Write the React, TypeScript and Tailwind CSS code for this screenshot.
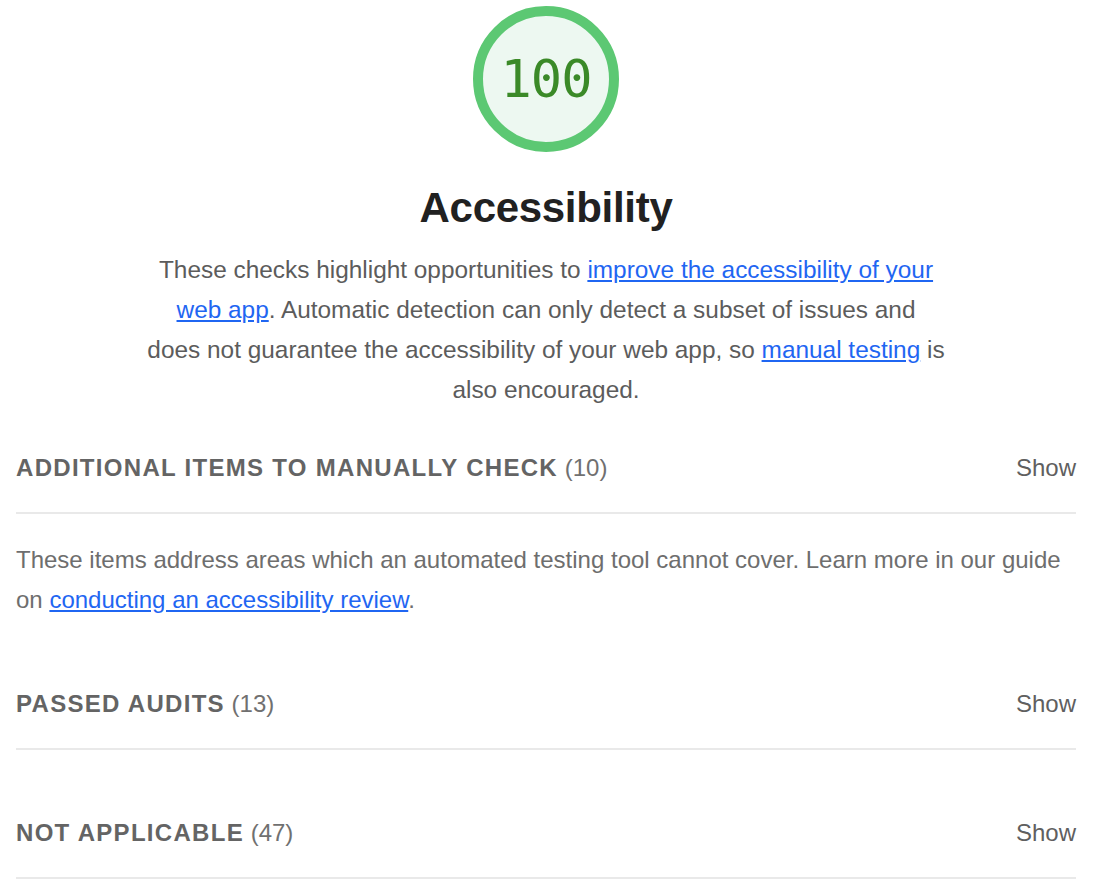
const sans = { fontFamily: '"Liberation Sans", Arial, sans-serif' };

function Gauge({ score }: { score: number }) {
  return (
    <div className="relative w-[146px] h-[146px]">
      <svg viewBox="0 0 146 146" className="w-full h-full">
        <circle cx="73" cy="73" r="68" fill="#edf8f1" stroke="#5cc873" strokeWidth="10" />
      </svg>
      <div className="absolute inset-0 flex items-center justify-center font-['DejaVu_Sans_Mono',monospace] text-[52px] text-[#3b8a28] tracking-[-1px]">
        {score}
      </div>
    </div>
  );
}

function SectionHeader({ title, count }: { title: string; count: number }) {
  return (
    <div className="flex items-center justify-between h-[90px] border-b-2 border-[#e9e9e9] text-[#646464]">
      <div className="text-[24px]">
        <span className="font-bold uppercase tracking-[1.3px]">{title}</span>{" "}
        <span className="text-[#707070]">({count})</span>
      </div>
      <button className="text-[24px] text-[#5f5f5f]">Show</button>
    </div>
  );
}

export default function App() {
  return (
    <div className="bg-white min-h-[886px] pl-4 pr-6" style={sans}>
      {/* score gauge + title */}
      <div className="flex flex-col items-center pt-[6px]">
        <Gauge score={100} />
        <h1 className="mt-[30px] text-[42px] leading-[52px] font-bold text-[#212121] tracking-[-0.3px]">Accessibility</h1>
        <p className="mt-[16px] max-w-[804px] text-center text-[24.4px] leading-[40px] text-[#5c5c5c]">
          These checks highlight opportunities to{" "}
          <a href="#" className="text-[#1f66f2] underline underline-offset-2">improve the accessibility of your web app</a>. Automatic
          detection can only detect a subset of issues and
          <br />
          does not guarantee the accessibility of your web app, so{" "}
          <a href="#" className="text-[#1f66f2] underline underline-offset-2">manual testing</a> is also encouraged.
        </p>
      </div>

      {/* manual checks */}
      <div className="mt-[14px]">
        <SectionHeader title="Additional items to manually check" count={10} />
        <p className="mt-[26px] text-[24px] leading-[40px] text-[#6e6e6e]">
          These items address areas which an automated testing tool cannot cover. Learn more in our guide on{" "}
          <a href="#" className="text-[#1f66f2] underline underline-offset-2">conducting an accessibility review</a>.
        </p>
      </div>

      <div className="mt-[40px]">
        <SectionHeader title="Passed audits" count={13} />
      </div>

      <div className="mt-[39px]">
        <SectionHeader title="Not applicable" count={47} />
      </div>
    </div>
  );
}
